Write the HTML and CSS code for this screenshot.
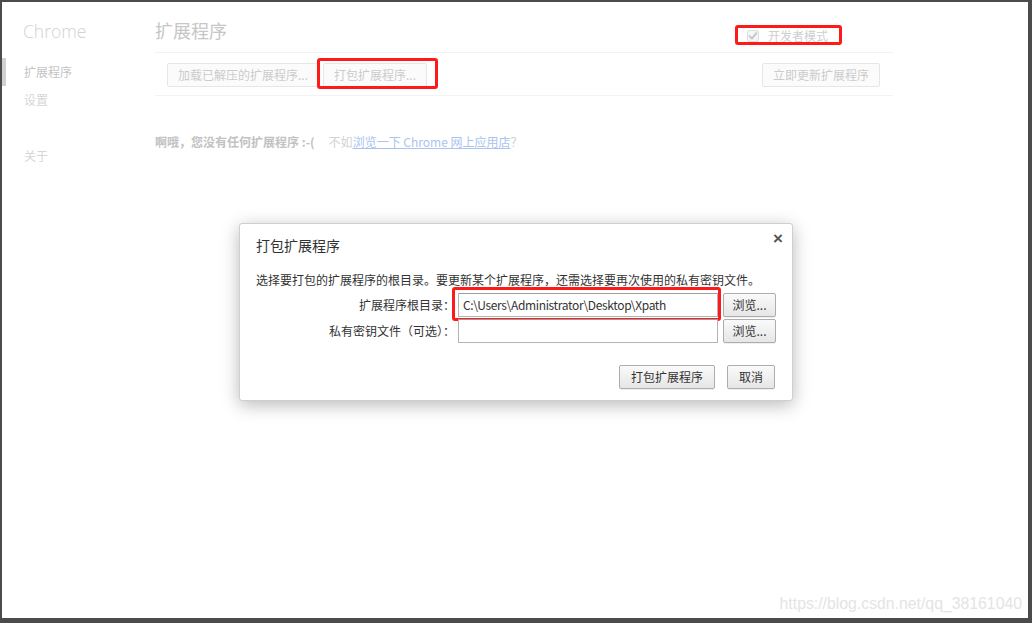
FILE: index.html
```html
<!DOCTYPE html>
<html lang="zh-CN">
<head>
<meta charset="utf-8">
<title>扩展程序</title>
<link rel="stylesheet" href="styles.css">
</head>
<body>
<div class="frame">
  <aside class="sidebar">
    <div class="brand">Chrome</div>
    <ul class="nav">
      <li class="nav-item selected">扩展程序</li>
      <li class="nav-item">设置</li>
      <li class="nav-item gap">关于</li>
    </ul>
  </aside>
  <main class="main">
    <header class="header">
      <h1 class="title">扩展程序</h1>
      <label class="devmode">
        <span class="check">
          <svg width="12" height="12" viewBox="0 0 12 12"><rect x="0.5" y="0.5" width="11" height="11" rx="1.5" fill="#f6f6f6" stroke="#dedede"/><path d="M2.6 6.2 L4.9 8.6 L9.4 3.2" fill="none" stroke="#c4c4c4" stroke-width="1.8" stroke-linecap="round" stroke-linejoin="round"/></svg>
        </span>
        <span class="devmode-text">开发者模式</span>
        <span class="mark mark-dev"></span>
      </label>
    </header>
    <div class="actions">
      <div class="actions-left">
        <button class="pbtn">加载已解压的扩展程序...</button>
        <span class="marked">
          <button class="pbtn">打包扩展程序...</button>
          <span class="mark mark-pack"></span>
        </span>
      </div>
      <button class="pbtn">立即更新扩展程序</button>
    </div>
    <p class="empty"><b class="empty-main">啊哦，您没有任何扩展程序 :-(</b><span class="empty-sub">不如<a class="link" href="#">浏览一下 Chrome 网上应用店</a>？</span></p>
  </main>
  <div class="watermark">https://blog.csdn.net/qq_38161040</div>
</div>

<div class="overlay">
  <div class="dialog">
    <div class="dlg-title">打包扩展程序</div>
    <span class="close">×</span>
    <p class="dlg-desc">选择要打包的扩展程序的根目录。要更新某个扩展程序，还需选择要再次使用的私有密钥文件。</p>
    <div class="form">
      <label class="flabel">扩展程序根目录：</label>
      <span class="marked">
        <input class="finput" type="text" value="C:\Users\Administrator\Desktop\Xpath">
        <span class="mark mark-input"></span>
      </span>
      <button class="dbtn browse">浏览...</button>
      <label class="flabel">私有密钥文件（可选）：</label>
      <span class="marked"><input class="finput" type="text" value=""></span>
      <button class="dbtn browse">浏览...</button>
    </div>
    <div class="dlg-actions">
      <button class="dbtn">打包扩展程序</button>
      <button class="dbtn">取消</button>
    </div>
  </div>
</div>
</body>
</html>
```

FILE: styles.css
```css
* { box-sizing: border-box; }
html, body { margin: 0; padding: 0; }
body {
  width: 1032px;
  height: 623px;
  overflow: hidden;
  background: #4b4b4b;
  font-family: "Noto Sans CJK SC", "Noto Sans", sans-serif;
  font-size: 12px;
  position: relative;
}
.frame {
  position: relative;
  margin: 2px 0 0 2px;
  width: 1026px;
  height: 616px;
  background: #fff;
  display: flex;
}
.sidebar { width: 153px; flex: none; }
.brand {
  font-family: "Open Sans", "Liberation Sans", sans-serif;
  font-weight: 300;
  font-size: 17.5px;
  line-height: 24px;
  color: #d2d2d2;
  padding: 17px 0 0 21px;
  margin-bottom: 15px;
}
.nav { list-style: none; margin: 0; padding: 0; }
.nav-item {
  line-height: 28px;
  height: 28px;
  padding-left: 22px;
  color: #d6d6d6;
}
.nav-item.selected {
  border-left: 4px solid #d0d0d0;
  padding-left: 18px;
  color: #c4c4c4;
}
.nav-item.gap { margin-top: 28px; }

.main { width: 738px; flex: none; }
.header {
  height: 51px;
  border-bottom: 1px solid #f3f3f3;
  display: flex;
  justify-content: space-between;
  align-items: flex-start;
}
.title {
  margin: 0;
  padding-top: 15px;
  font-size: 18px;
  line-height: 26px;
  font-weight: 400;
  color: #c6c6c6;
}
.devmode {
  position: relative;
  margin: 25px 65px 0 0;
  display: flex;
  align-items: center;
  height: 18px;
  color: #cfcfcf;
}
.check { display: flex; margin-right: 9px; }
.devmode-text { line-height: 18px; }

.mark {
  position: absolute;
  border: 3px solid #ff1a1a;
  border-radius: 3px;
  pointer-events: none;
}
.mark-dev { left: -12px; right: -14px; top: -2px; bottom: 0; }
.marked { position: relative; display: inline-flex; }
.mark-pack { left: -6px; right: -11px; top: -5px; bottom: -2px; }
.mark-input { left: -6px; right: -3px; top: -6px; bottom: -4px; }

.actions {
  height: 43px;
  border-bottom: 1px solid #f3f3f3;
  padding: 10px 13px 0 12px;
  display: flex;
  justify-content: space-between;
  align-items: flex-start;
}
.actions-left { display: flex; gap: 4px; }
.pbtn {
  height: 24px;
  padding: 0 10px;
  font-family: inherit;
  font-size: 12px;
  color: #cbcbcb;
  background: #fbfbfb;
  border: 1px solid #e6e6e6;
  border-radius: 2px;
  line-height: 22px;
  white-space: nowrap;
}
.empty {
  margin: 36px 0 0;
  line-height: 20px;
  color: #c8c8c8;
}
.empty-main { color: #c2c2c2; font-weight: 700; }
.empty-sub { margin-left: 14px; color: #d2d2d2; }
.link { color: #a9c4ef; text-decoration: underline; }

.watermark {
  position: absolute;
  right: 6px;
  bottom: 5px;
  font-family: "Liberation Sans", Arial, sans-serif;
  font-size: 15.8px;
  color: #e4e4e4;
  line-height: 18px;
}

.overlay {
  position: absolute;
  inset: 0;
  display: flex;
  align-items: center;
  justify-content: center;
}
.dialog {
  position: relative;
  width: 554px;
  background: #fff;
  border: 1px solid #cfcfcf;
  border-radius: 3px;
  box-shadow: 0 4px 18px rgba(0, 0, 0, 0.28);
  padding: 11px 17px 11px 16px;
  color: #333;
}
.dlg-title { font-size: 14px; line-height: 20px; color: #333; }
.close {
  position: absolute;
  right: 9px;
  top: 3px;
  font-size: 17px;
  font-weight: 700;
  color: #555;
  line-height: 24px;
  font-family: "Liberation Sans", Arial, sans-serif;
}
.dlg-desc { margin: 17px 0 0; line-height: 16px; }
.form {
  margin-top: 5px;
  display: grid;
  grid-template-columns: 199px 260px 55px;
  grid-auto-rows: 24px;
  column-gap: 3px;
  row-gap: 2px;
}
.flabel {
  text-align: right;
  line-height: 24px;
  color: #333;
  white-space: nowrap;
}
.finput {
  width: 260px;
  height: 24px;
  border: 1px solid #b4b4b4;
  border-top-color: #9c9c9c;
  border-radius: 1px;
  padding: 0 4px;
  font-family: inherit;
  font-size: 12px;
  letter-spacing: -0.35px;
  color: #333;
  outline: none;
}
.dbtn {
  height: 24px;
  padding: 0 11px;
  font-family: inherit;
  font-size: 12px;
  color: #333;
  background: linear-gradient(#fafafa, #e6e6e6);
  border: 1px solid #adadad;
  border-radius: 2px;
  line-height: 22px;
  white-space: nowrap;
  box-shadow: 0 1px 0 rgba(0, 0, 0, 0.06);
}
.dbtn.browse {
  width: 53px;
  margin-left: 2px;
  padding: 0;
}
.dlg-actions {
  margin-top: 22px;
  display: flex;
  justify-content: flex-end;
  gap: 12px;
}
```
